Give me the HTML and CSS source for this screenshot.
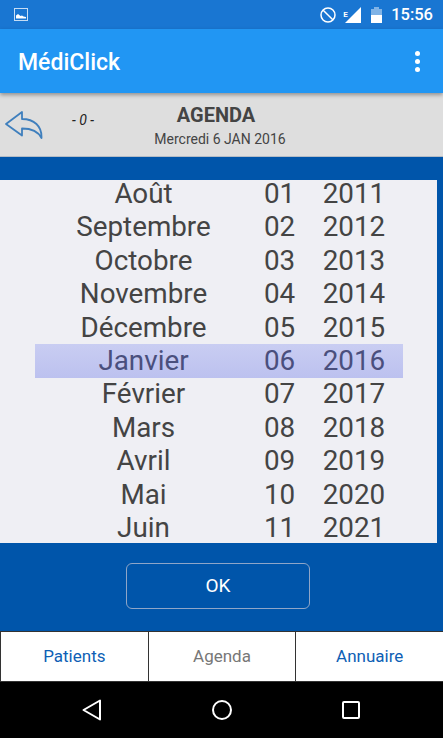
FILE: index.html
```html
<!DOCTYPE html>
<html lang="fr">
<head>
    <meta charset="UTF-8">
    <meta name="viewport" content="width=device-width, initial-scale=1.0">
    <title>MédiClick</title>

    <link rel="stylesheet" href="styles.css">
</head>
<body>
    <div class="status-bar">
        <svg class="status-img" width="14" height="14" viewBox="0 0 14 14">
            <rect x="0.5" y="0.5" width="13" height="12" fill="none" stroke="#fff" stroke-opacity=".75"/>
            <path d="M2 10.5V7.5L4 6l2.5 2L8 7.5l1.5 1L12 9v1.500z" fill="#fff"/>
        </svg>
        <div class="status-right">
            <svg width="16" height="16" viewBox="0 0 16 16">
                <circle cx="8" cy="8" r="7" fill="none" stroke="#fff" stroke-width="1.500"/>
                <path d="M3.200 3.200l9.600 9.600" stroke="#fff" stroke-width="1.500"/>
            </svg>
            <span class="status-e">E</span>
            <svg class="status-signal" width="16" height="16" viewBox="0 0 16 16">
                <path d="M16 0v16H0z" fill="#fff"/>
            </svg>
            <svg class="status-batt" width="11" height="16" viewBox="0 0 11 16">
                <path d="M3 0h5v2H11v6H0V2h3z" fill="#fff" fill-opacity=".45"/>
                <rect x="0" y="8" width="11" height="8" fill="#fff"/>
            </svg>
            <span class="status-time">15:56</span>
        </div>
    </div>

    <div class="app-bar">
        <span class="app-title">MédiClick</span>
        <div class="app-menu"><i></i><i></i><i></i></div>
    </div>

    <div class="head">
        <svg class="btn-back" width="38" height="30" viewBox="0 0 38 30">
            <path d="M1 14L17 2V9C29 9 37 16 36.500 28C33 21 27 18.500 17 18.500V25.500Z" fill="none" stroke="#3f7fbd" stroke-width="1.800" stroke-linejoin="round"/>
        </svg>
        <span class="head-count">- 0 -</span>
        <div class="head-title">
            <b>AGENDA</b>
            <span>Mercredi 6 JAN 2016</span>
        </div>
    </div>

    <div class="main">
        <div class="picker">
            <div class="row"><span>Août</span><span>01</span><span>2011</span></div>
            <div class="row"><span>Septembre</span><span>02</span><span>2012</span></div>
            <div class="row"><span>Octobre</span><span>03</span><span>2013</span></div>
            <div class="row"><span>Novembre</span><span>04</span><span>2014</span></div>
            <div class="row"><span>Décembre</span><span>05</span><span>2015</span></div>
            <div class="row row-selected"><span>Janvier</span><span>06</span><span>2016</span></div>
            <div class="row"><span>Février</span><span>07</span><span>2017</span></div>
            <div class="row"><span>Mars</span><span>08</span><span>2018</span></div>
            <div class="row"><span>Avril</span><span>09</span><span>2019</span></div>
            <div class="row"><span>Mai</span><span>10</span><span>2020</span></div>
            <div class="row"><span>Juin</span><span>11</span><span>2021</span></div>
        </div>
        <div class="ok-wrap">
            <button class="btn-ok" type="button">OK</button>
        </div>
    </div>

    <div class="tabs">
        <a class="tab">Patients</a>
        <a class="tab tab-current">Agenda</a>
        <a class="tab">Annuaire</a>
    </div>

    <div class="nav-bar">
        <svg width="22" height="24" viewBox="0 0 22 24">
            <path d="M19 2.500V21.500L2.500 12Z" fill="none" stroke="#fff" stroke-width="2" stroke-linejoin="round"/>
        </svg>
        <svg width="22" height="22" viewBox="0 0 22 22">
            <circle cx="11" cy="11" r="9" fill="none" stroke="#fff" stroke-width="2"/>
        </svg>
        <svg width="20" height="20" viewBox="0 0 20 20">
            <rect x="2" y="2" width="16" height="16" rx="1" fill="none" stroke="#fff" stroke-width="2"/>
        </svg>
    </div>
</body>
</html>
```

FILE: styles.css
```css
*{
    box-sizing: border-box;
}

body{
    margin: 0;
    width: 443px;
    height: 738px;
    display: flex;
    flex-direction: column;
    overflow: hidden;
    font-family: Roboto, "Liberation Sans", sans-serif;
    background-color: #0055aa;
}

.status-bar{
    height: 29px;
    background-color: #1976d2;
    display: flex;
    align-items: center;
    justify-content: space-between;
    padding: 0 10px 0 14px;
    color: white;
}

.status-right{
    display: flex;
    align-items: center;
}

.status-e{
    font-size: 8px;
    font-weight: 700;
    align-self: flex-start;
    margin: 5px 0 0 7px;
    width: 2px;
}

.status-batt{
    margin-left: 10px;
}

.status-time{
    font-size: 16.500px;
    font-weight: 500;
    margin-left: 9px;
}

.app-bar{
    height: 64px;
    background-color: #2196f3;
    display: flex;
    align-items: center;
    justify-content: space-between;
    padding: 2px 23px 0 18px;
    box-shadow: 0 2px 4px rgba(0, 0, 0, .35);
    position: relative;
    z-index: 1;
}

.app-title{
    color: white;
    font-size: 23px;
    font-weight: 500;
}

.app-menu{
    display: flex;
    flex-direction: column;
    gap: 3px;
    margin-top: -2px;
}

.app-menu i{
    width: 5px;
    height: 5px;
    border-radius: 50%;
    background-color: white;
}

.head{
    height: 64px;
    background-color: #dedede;
    border-bottom: 1px solid #b4bcc6;
    display: flex;
    align-items: center;
    color: #444;
}

.btn-back{
    margin: 1px 0 0 5px;
}

.head-count{
    font-size: 14px;
    font-style: italic;
    color: #222;
    width: 24px;
    white-space: nowrap;
    margin: -9px 0 0 29px;
}

.head-title{
    flex: 1;
    margin-right: 99px;
    display: flex;
    flex-direction: column;
    align-items: center;
    padding-top: 2px;
}

.head-title b{
    font-size: 20px;
    font-weight: 700;
    line-height: 26px;
    padding-right: 8px;
}

.head-title span{
    font-size: 14px;
    line-height: 20px;
    margin-top: 1px;
}

.main{
    flex: 1;
    padding-top: 23px;
    background-color: #0055aa;
}

.picker{
    width: 437px;
    height: 363px;
    background-color: #efeff4;
    overflow: hidden;
    display: flex;
    flex-direction: column;
    justify-content: center;
    padding: 0 34px 1px 35px;
}

.row{
    flex: 0 0 33.45px;
    display: grid;
    grid-template-columns: 217px 55px 1fr;
    align-items: center;
    text-align: center;
    font-size: 27.800px;
    line-height: 28px;
    padding-right: 2px;
    color: #444;
}

.row-selected{
    background: linear-gradient(#c9cdf2, #bcc1ef);
    color: #4a4f7d;
}

.ok-wrap{
    display: flex;
    justify-content: center;
    padding: 20px 7px 0 0;
}

.btn-ok{
    width: 184px;
    height: 46px;
    background-color: transparent;
    border: 1px solid #8fa6c8;
    border-radius: 6px;
    color: white;
    font-family: inherit;
    font-size: 19px;
    padding-bottom: 3px;
}

.tabs{
    height: 51px;
    display: flex;
    background-color: #333;
    padding: 1px 0 1px 1px;
    gap: 1px;
}

.tab{
    flex: 1;
    background-color: white;
    color: #0e5fb5;
    font-size: 17px;
    padding-bottom: 2px;
    display: flex;
    align-items: center;
    justify-content: center;
}

.tab-current{
    color: #777;
}

.nav-bar{
    height: 56px;
    background-color: black;
    display: flex;
    align-items: center;
    justify-content: space-between;
    padding: 0 82px 0 81px;
}
```
